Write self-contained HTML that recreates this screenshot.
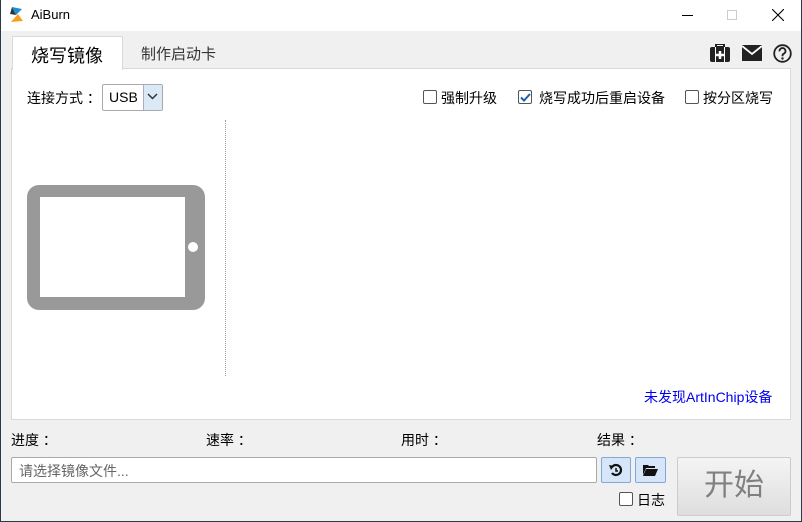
<!DOCTYPE html>
<html><head><meta charset="utf-8"><style>
*{margin:0;padding:0;box-sizing:border-box}
body{width:802px;height:522px;background:#f0f0f0;font-family:"Liberation Sans","Noto Sans CJK SC",sans-serif;font-size:14px;color:#000;position:relative;overflow:hidden}
.abs{position:absolute}
.cb{position:absolute;width:14px;height:14px;border:1px solid #555;background:#fff;border-radius:2px}
</style></head><body>
<div class="abs" style="left:0;top:0;width:802px;height:31px;background:#fff"></div>
<div class="abs" style="left:0;top:0;width:1px;height:522px;background:#2b3a4a"></div>
<div class="abs" style="left:801px;top:0;width:1px;height:522px;background:#2b3a4a"></div>
<div class="abs" style="left:0;top:521px;width:802px;height:1px;background:#2b3a4a"></div>
<svg class="abs" style="left:9px;top:6px" width="16" height="18" viewBox="0 0 16 18"><path d="M3 1 L13 3 L7 9 Z" fill="#1e8fd6"/><path d="M9 8 L14 15 L2 16 Z" fill="#f5a020"/><path d="M7 9 L3 1 L1 8 Z" fill="#333"/></svg>
<div class="abs" style="left:31px;top:7px;font-size:13px">AiBurn</div>
<div class="abs" style="left:682px;top:15px;width:11px;height:1px;background:#000"></div>
<div class="abs" style="left:727px;top:10px;width:10px;height:10px;border:1px solid #ccc"></div>
<svg class="abs" style="left:772px;top:9px" width="12" height="12"><path d="M0 0L12 12M12 0L0 12" stroke="#000" stroke-width="1.1"/></svg>

<div class="abs" style="left:11px;top:68px;width:780px;height:352px;background:#fff;border:1px solid #d9d9d9"></div>
<div class="abs" style="left:12px;top:36px;width:111px;height:34px;background:#fff;border:1px solid #d9d9d9;border-bottom:none"></div>
<div class="abs" style="left:31px;top:42px;font-size:18px">烧写镜像</div>
<div class="abs" style="left:141px;top:43px;font-size:15px;color:#333">制作启动卡</div>

<svg class="abs" style="left:710px;top:44px" width="20" height="18" viewBox="0 0 20 18"><rect x="6" y="0" width="8" height="3" fill="none" stroke="#222" stroke-width="2"/><rect x="0" y="3" width="20" height="15" rx="2" fill="#222"/><rect x="5" y="3" width="10" height="15" fill="#fff"/><rect x="6" y="3" width="8" height="15" fill="#222"/><path d="M10 7v8M6 11h8" stroke="#fff" stroke-width="2.5"/></svg>
<svg class="abs" style="left:742px;top:45px" width="20" height="16" viewBox="0 0 20 16"><rect width="20" height="16" fill="#222"/><path d="M0 1L10 9L20 1" stroke="#fff" stroke-width="1.8" fill="none"/></svg>
<svg class="abs" style="left:773px;top:44px" width="19" height="19" viewBox="0 0 19 19"><circle cx="9.5" cy="9.5" r="8.3" fill="none" stroke="#222" stroke-width="1.8"/><path d="M6.5 7.3a3 3 0 1 1 4 2.6c-1 .5-1 1-1 2.3" fill="none" stroke="#222" stroke-width="1.9"/><circle cx="9.5" cy="14.5" r="1.2" fill="#222"/></svg>

<div class="abs" style="left:27px;top:88px">连接方式 ：</div>
<div class="abs" style="left:102px;top:84px;width:61px;height:27px;border:1px solid #aaa;border-radius:2px;background:#fff"></div>
<div class="abs" style="left:109px;top:89px;font-size:14px">USB</div>
<div class="abs" style="left:143px;top:85px;width:19px;height:25px;background:#dbe8f6;border-left:1px solid #aac"></div>
<svg class="abs" style="left:147px;top:93px" width="11" height="7"><path d="M1 1L5.5 5.5L10 1" stroke="#333" stroke-width="1.5" fill="none"/></svg>

<div class="cb" style="left:423px;top:90px"></div><div class="abs" style="left:441px;top:88px">强制升级</div>
<div class="cb" style="left:518px;top:90px"></div>
<svg class="abs" style="left:519px;top:91px" width="13" height="13"><path d="M2 6.5L5 9.5L11 3" stroke="#1a5fb4" stroke-width="2" fill="none"/></svg>
<div class="abs" style="left:539px;top:88px">烧写成功后重启设备</div>
<div class="cb" style="left:685px;top:90px"></div><div class="abs" style="left:703px;top:88px">按分区烧写</div>

<div class="abs" style="left:225px;top:120px;height:256px;border-left:1px dotted #999"></div>
<div class="abs" style="left:27px;top:185px;width:178px;height:125px;background:#999;border-radius:12px"></div>
<div class="abs" style="left:40px;top:197px;width:145px;height:100px;background:#fff"></div>
<div class="abs" style="left:188px;top:242px;width:10px;height:10px;background:#fff;border-radius:50%"></div>

<div class="abs" style="left:644px;top:387px;color:#0000ee">未发现ArtInChip设备</div>

<div class="abs" style="left:11px;top:430px">进度 ：</div>
<div class="abs" style="left:206px;top:430px">速率 ：</div>
<div class="abs" style="left:401px;top:430px">用时 ：</div>
<div class="abs" style="left:597px;top:430px">结果 ：</div>
<div class="abs" style="left:11px;top:457px;width:586px;height:26px;background:#fff;border:1px solid #aaa;border-radius:2px;padding:3px 7px;color:#666">请选择镜像文件...</div>
<div class="abs" style="left:601px;top:457px;width:30px;height:26px;background:#d6e6f8;border:1px solid #7ea9d8;border-radius:2px"></div>
<svg class="abs" style="left:609px;top:463px" width="14" height="14" viewBox="0 0 14 14"><path d="M3 4A5 5 0 1 1 3 10" fill="none" stroke="#111" stroke-width="2.2"/><path d="M0 2L5 3L2 7Z" fill="#111"/><path d="M7 5v3h2" stroke="#111" stroke-width="1.5" fill="none"/></svg>
<div class="abs" style="left:635px;top:457px;width:31px;height:26px;background:#d6e6f8;border:1px solid #7ea9d8;border-radius:2px"></div>
<svg class="abs" style="left:643px;top:464px" width="15" height="12" viewBox="0 0 15 12"><path d="M0 1h5l1 1h6v2H3L0 11Z" fill="#111"/><path d="M3 5h12L12 12H0Z" fill="#111"/></svg>
<div class="cb" style="left:619px;top:492px"></div><div class="abs" style="left:637px;top:490px">日志</div>
<div class="abs" style="left:677px;top:457px;width:114px;height:59px;background:linear-gradient(#f4f4f4,#dedede);border:1px solid #ccc;border-radius:2px;text-align:center;font-size:30px;line-height:56px;color:#808080">开始</div>
</body></html>
